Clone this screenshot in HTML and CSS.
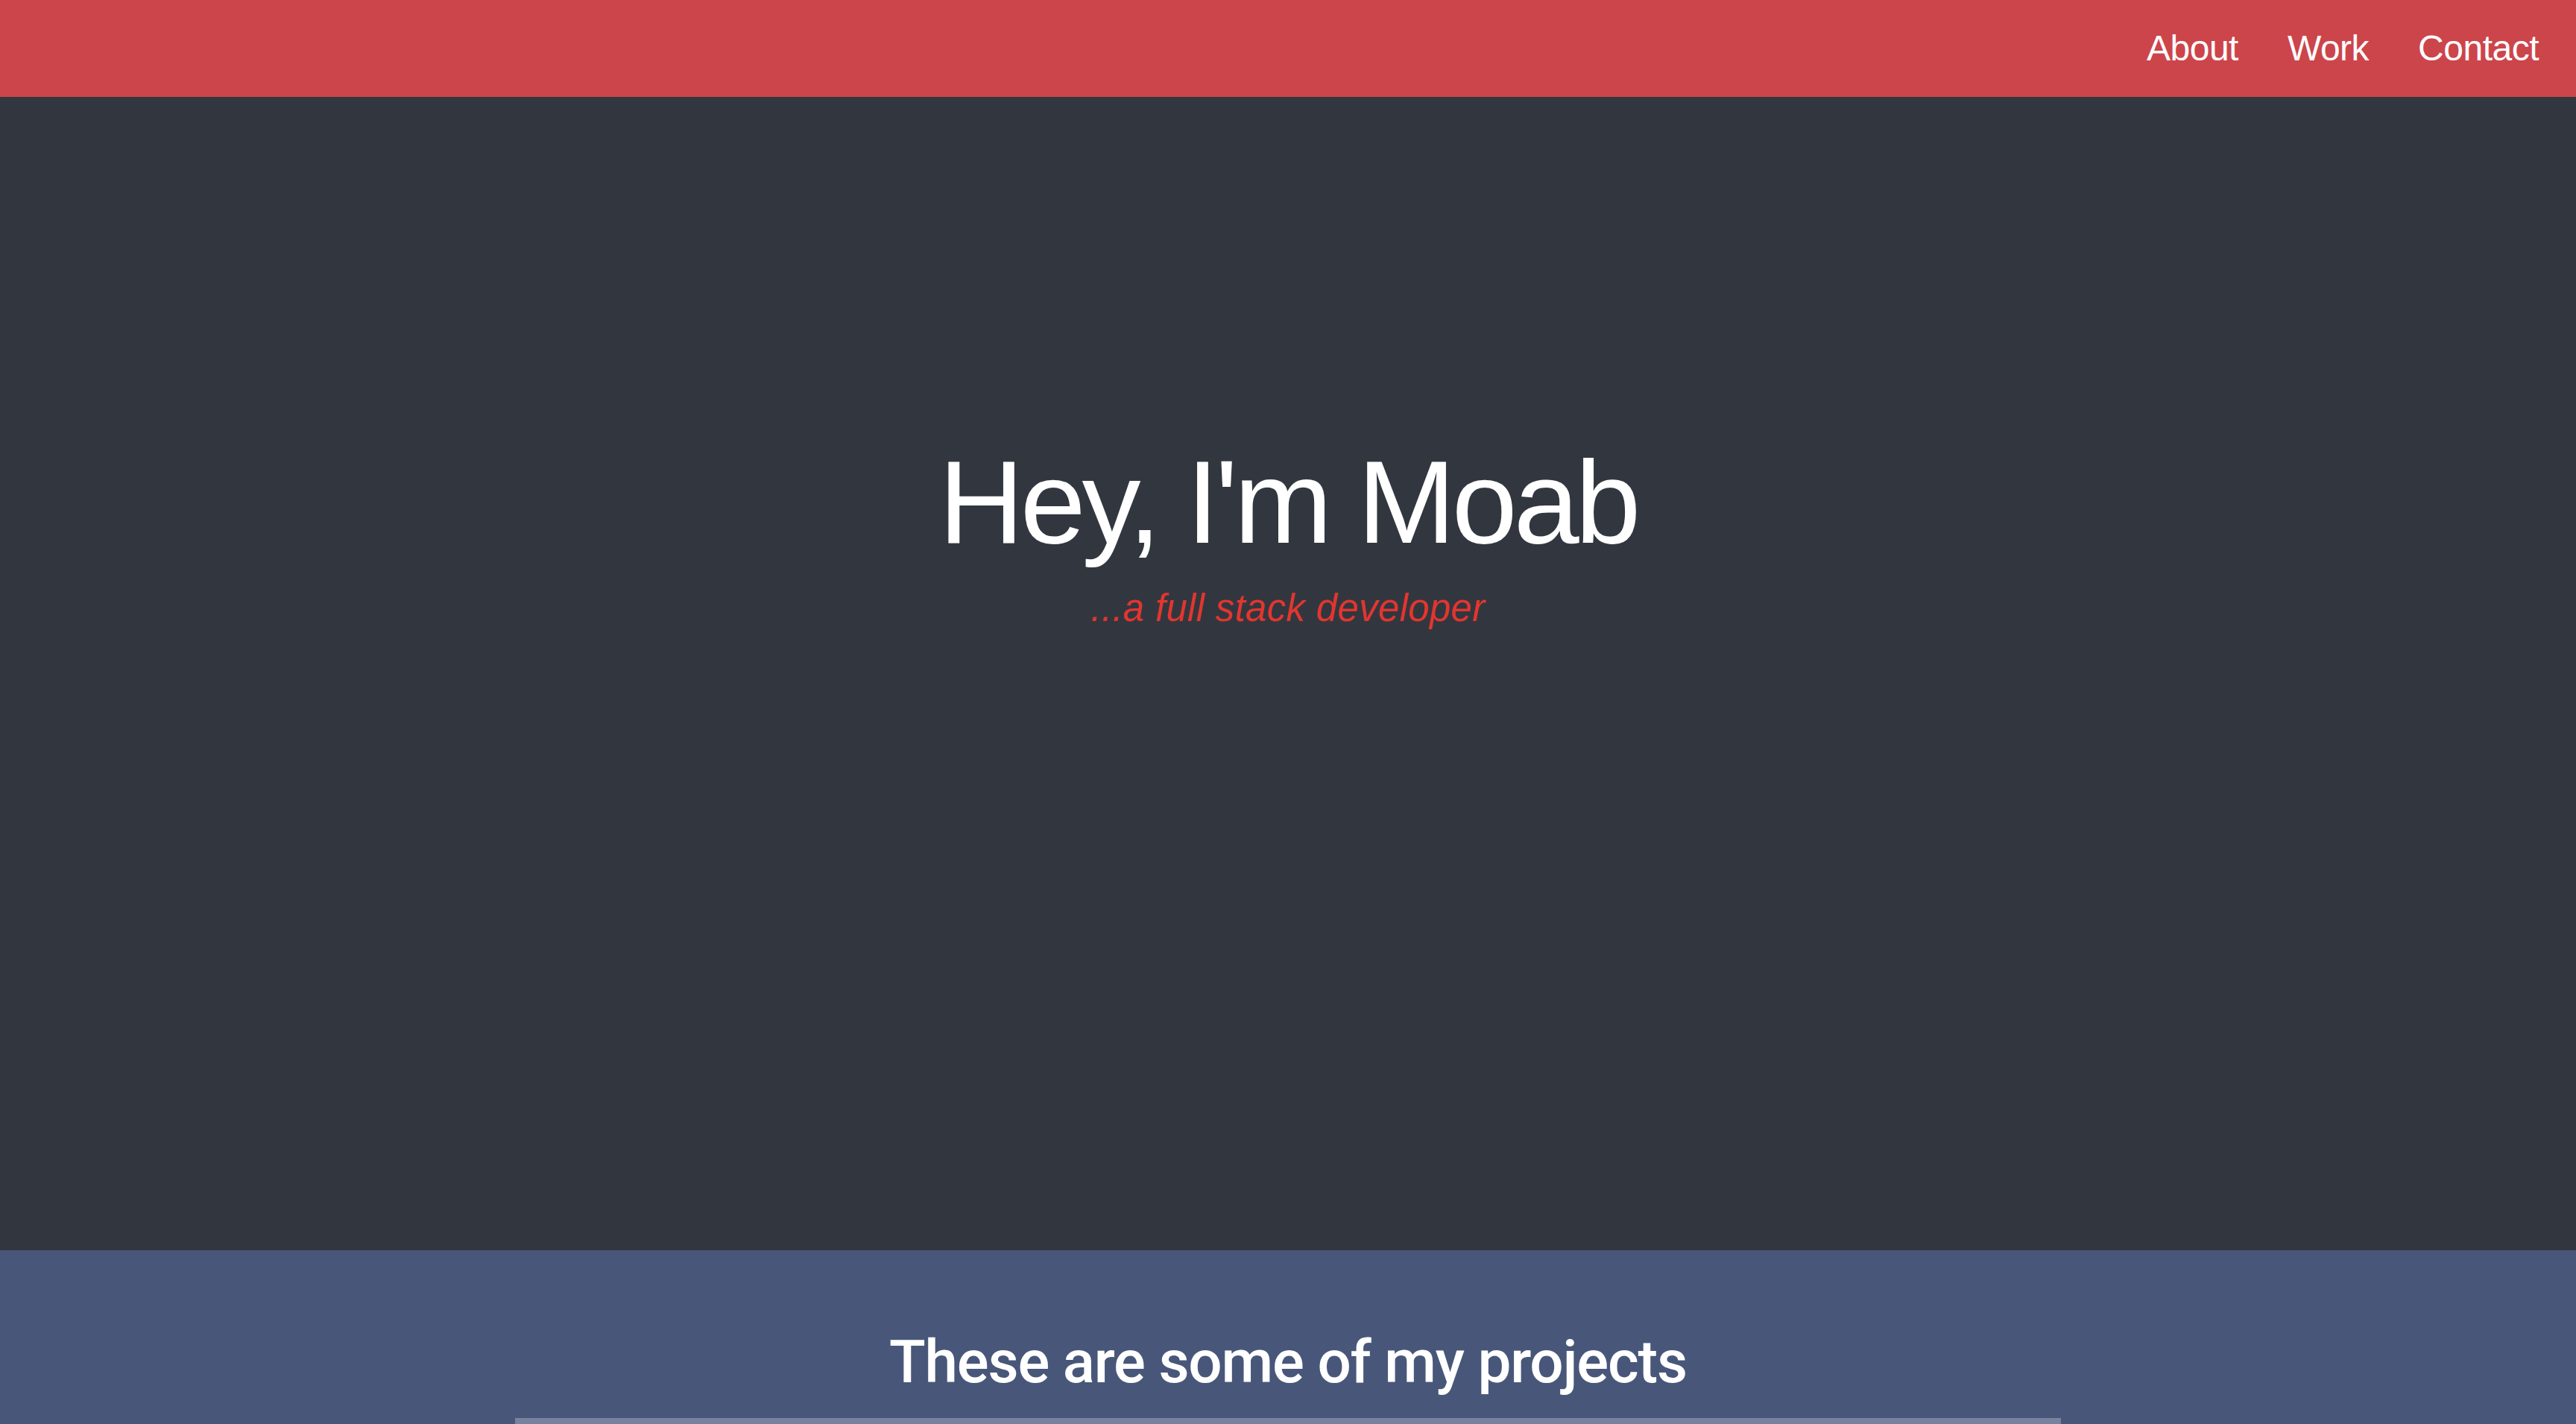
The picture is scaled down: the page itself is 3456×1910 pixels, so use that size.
FILE: index.html
```html
<!DOCTYPE html>
<html lang="en">
<head>
<meta charset="utf-8">
<title>Moab</title>
<link rel="stylesheet" href="styles.css">
</head>
<body>
<nav class="nav">
  <a class="nav-link" href="#about">About</a>
  <a class="nav-link" href="#work">Work</a>
  <a class="nav-link" href="#contact">Contact</a>
</nav>
<header class="hero">
  <h1 class="hero-title">Hey, I'm Moab</h1>
  <p class="hero-sub">...a full stack developer</p>
</header>
<section class="projects" id="work">
  <h2 class="projects-title">These are some of my projects</h2>
  <div class="projects-rule"></div>
</section>
</body>
</html>
```
FILE: styles.css
```css
html, body {
  margin: 0;
  padding: 0;
}
body {
  font-family: "Liberation Sans", Arial, sans-serif;
  background: #485779;
  color: #fff;
  overflow: hidden;
}
.nav {
  height: 130px;
  background: #cc454b;
  display: flex;
  justify-content: flex-end;
  align-items: center;
  gap: 66px;
  padding-right: 50px;
}
.nav-link {
  color: #fff;
  text-decoration: none;
  font-size: 48px;
  line-height: 1;
  letter-spacing: -0.5px;
}
.hero {
  height: 1547px;
  box-sizing: border-box;
  background: #32373f;
  padding-top: 464px;
  display: flex;
  flex-direction: column;
  align-items: center;
}
.hero-title {
  margin: 0;
  font-size: 158px;
  font-weight: 400;
  line-height: 1;
  letter-spacing: -5px;
}
.hero-sub {
  margin: 38px 0 0;
  font-size: 51px;
  line-height: 1;
  font-style: italic;
  font-weight: 300;
  color: #e3352f;
  letter-spacing: 0.3px;
}
.projects {
  padding-top: 110px;
  display: flex;
  flex-direction: column;
  align-items: center;
}
.projects-title {
  margin: 0;
  font-family: Roboto, "Liberation Sans", sans-serif;
  font-size: 80px;
  font-weight: 500;
  line-height: 1;
  letter-spacing: -1.2px;
}
.projects-rule {
  margin-top: 35px;
  width: 60%;
  height: 8px;
  background: #78829f;
}
```
